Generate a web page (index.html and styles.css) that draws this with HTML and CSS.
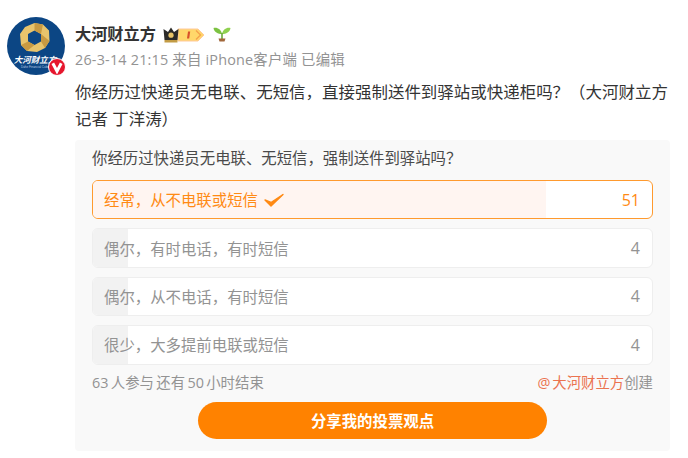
FILE: index.html
```html
<!DOCTYPE html>
<html lang="zh">
<head>
<meta charset="utf-8">
<title>大河财立方</title>
<link rel="stylesheet" href="styles.css">
</head>
<body>
<main class="post">
  <div class="avatar">
    <svg class="avatar-img" viewBox="0 0 58 58" width="58" height="58">
      <circle cx="29" cy="29" r="29" fill="#0c4684"/>
      <path d="M27.5 6 L36 7.5 L42 13.5 L42.5 24 L38 31 L30 35 L20 34 L14 28 L13 17 L18 10 Z M27.5 13.5 L21 17 L21 24.5 L27.5 28 L34 24.5 L34 17 Z" fill="#e8c46c" fill-rule="evenodd"/>
      <path d="M27.5 6 L36 7.5 L34 17 L27.5 13.5 Z M42.5 24 L38 31 L34 24.5 L34 17 Z M20 34 L14 28 L21 24.5 L27.5 28 Z" fill="#c89a42"/>
      <text x="28" y="46" class="avatar-text" text-anchor="middle">大河财立方</text>
      <text x="28" y="51" class="avatar-sub" text-anchor="middle">Dahe Financial Cube</text>
    </svg>
    <span class="vbadge">
      <svg viewBox="0 0 18 18" width="18" height="18">
        <circle cx="9" cy="9" r="8.5" fill="#e6162d" stroke="#fff" stroke-width="1"/>
        <path d="M4.8 5.2 L9 13.2 L13.2 5.2" fill="none" stroke="#fff" stroke-width="3"/>
      </svg>
    </span>
  </div>
  <div class="content">
    <div class="name-row">
      <span class="name">大河财立方</span>
      <svg class="crown" viewBox="0 0 42 16" width="42" height="16">
        <path d="M15 2 H35 L41 8 L35 14 H15 Z" fill="#ffd76a" stroke="#ffc99a" stroke-width="1"/>
        <path d="M33 3.5 L37.5 8 L33 12.5" fill="none" stroke="#f5a14a" stroke-width="1.3"/>
        <path d="M25 4.5 L27.2 4.5 L26.2 11.5 L24 11.5 Z" fill="#d8522a"/>
        <path d="M0.5 2 L5 5 L8 0.5 L11 5 L15.5 2 L14.5 13 H1.5 Z" fill="#2b2a28"/>
        <rect x="1.5" y="13" width="13" height="2.5" fill="#c29b45"/>
        <circle cx="8" cy="8.2" r="2.6" fill="#e8c468"/>
      </svg>
      <svg class="sprout" viewBox="0 0 18 16" width="18" height="16">
        <path d="M9 8 C8 3 4 1 0.5 2 C1 6 5 8 9 8 Z" fill="#7cc242"/>
        <path d="M9 8 C10 3 14 1 17.5 2 C17 6 13 8 9 8 Z" fill="#8fd14f"/>
        <rect x="8.2" y="7" width="1.6" height="6" fill="#6aa83a"/>
        <path d="M5.5 12.5 H12.5 L11.5 15.5 H6.5 Z" fill="#a1673a"/>
      </svg>
    </div>
    <div class="meta">26-3-14 21:15 来自 iPhone客户端 已编辑</div>
    <p class="text">你经历过快递员无电联、无短信，直接强制送件到驿站或快递柜吗？（大河财立方记者 丁洋涛）</p>
    <section class="poll">
      <h2 class="question">你经历过快递员无电联、无短信，强制送件到驿站吗？</h2>
      <ul class="options">
        <li class="option option-picked">
          <span class="fill fill-picked" style="width:81%"></span>
          <span class="label">经常，从不电联或短信
            <svg class="check" viewBox="0 0 22 16" width="22" height="16"><path d="M2 8 L8 14 L20 2.5 L8 10.5 Z" fill="#ff8a14" stroke="#ff8a14" stroke-width="1.4" stroke-linejoin="round"/></svg>
          </span>
          <span class="count">51</span>
        </li>
        <li class="option">
          <span class="fill" style="width:6.3%"></span>
          <span class="label">偶尔，有时电话，有时短信</span>
          <span class="count">4</span>
        </li>
        <li class="option">
          <span class="fill" style="width:6.3%"></span>
          <span class="label">偶尔，从不电话，有时短信</span>
          <span class="count">4</span>
        </li>
        <li class="option">
          <span class="fill" style="width:6.3%"></span>
          <span class="label">很少，大多提前电联或短信</span>
          <span class="count">4</span>
        </li>
      </ul>
      <div class="foot">
        <span class="stats">63 人参与 还有 50 小时结束</span>
        <span><span class="author">@ 大河财立方</span>创建</span>
      </div>
      <button class="share" type="button">分享我的投票观点</button>
    </section>
  </div>
</main>
</body>
</html>
```

FILE: styles.css
```css
* { box-sizing: border-box; }
html, body { margin: 0; padding: 0; background: #fff; }
body {
  width: 688px;
  height: 458px;
  overflow: hidden;
  font-family: "Open Sans", "Noto Sans CJK SC", sans-serif;
  color: #333;
}
.post {
  display: flex;
  gap: 10px;
  padding: 17px 18px 0 7px;
}
.avatar {
  position: relative;
  flex: none;
  width: 58px;
  height: 58px;
}
.avatar-img { display: block; }
.avatar-text {
  font-family: "Noto Sans CJK SC", sans-serif;
  font-size: 8.5px;
  font-weight: 700;
  font-style: italic;
  fill: #fff;
}
.avatar-sub {
  font-family: "Liberation Sans", sans-serif;
  font-size: 3px;
  fill: #b9cbe0;
}
.vbadge {
  position: absolute;
  right: -1px;
  bottom: -1px;
  width: 18px;
  height: 18px;
}
.vbadge svg { display: block; }
.content { flex: 1; min-width: 0; }
.name-row {
  display: flex;
  align-items: center;
  height: 20px;
  margin-top: 7px;
}
.name {
  font-size: 16.2px;
  font-weight: 700;
  line-height: 20px;
  color: #333;
}
.crown { margin-left: 7px; margin-top: 1px; }
.sprout { margin-left: 8px; margin-top: -1px; }
.meta {
  margin-top: 7px;
  font-size: 14.4px;
  letter-spacing: 0.2px;
  line-height: 18px;
  color: #939393;
  white-space: nowrap;
}
.text {
  margin: 9px 0 0;
  font-size: 16.48px;
  line-height: 27px;
  color: #333;
}
.poll {
  margin-top: 8px;
  padding: 9px 17px 0;
  height: 311px;
  background: #f9f9f9;
  border-radius: 4px;
}
.question {
  margin: 0;
  font-size: 15.4px;
  font-weight: 400;
  line-height: 20px;
  color: #4a4a4a;
}
.options {
  list-style: none;
  margin: 11px 0 0;
  padding: 0;
  display: flex;
  flex-direction: column;
  gap: 9px;
}
.option {
  position: relative;
  display: flex;
  align-items: center;
  justify-content: space-between;
  height: 39.4px;
  padding: 0 11px;
  background: #fff;
  border: 1px solid #eeeeee;
  border-radius: 6px;
  overflow: hidden;
  font-size: 15.4px;
  color: #939393;
}
.option-picked {
  border-color: #ff9a2e;
  color: #ff8a14;
}
.fill {
  position: absolute;
  left: 0;
  top: 0;
  bottom: 0;
  background: #f2f2f2;
}
.fill-picked { background: #fff5f1; }
.label {
  position: relative;
  display: flex;
  align-items: center;
  gap: 5px;
}
.check { display: block; }
.count {
  position: relative;
  font-size: 16px;
  padding-right: 1px;
}
.foot {
  display: flex;
  justify-content: space-between;
  margin-top: 8px;
  font-size: 14.4px;
  line-height: 20px;
  color: #939393;
}
.stats { word-spacing: -1.4px; }
.author { color: #eb7350; word-spacing: -2px; }
.share {
  display: block;
  width: 349px;
  height: 37px;
  margin: 9px auto 0;
  padding: 0;
  border: 0;
  border-radius: 19px;
  background: #ff8200;
  color: #fff;
  font: 700 15.4px "Noto Sans CJK SC", sans-serif;
}
```
